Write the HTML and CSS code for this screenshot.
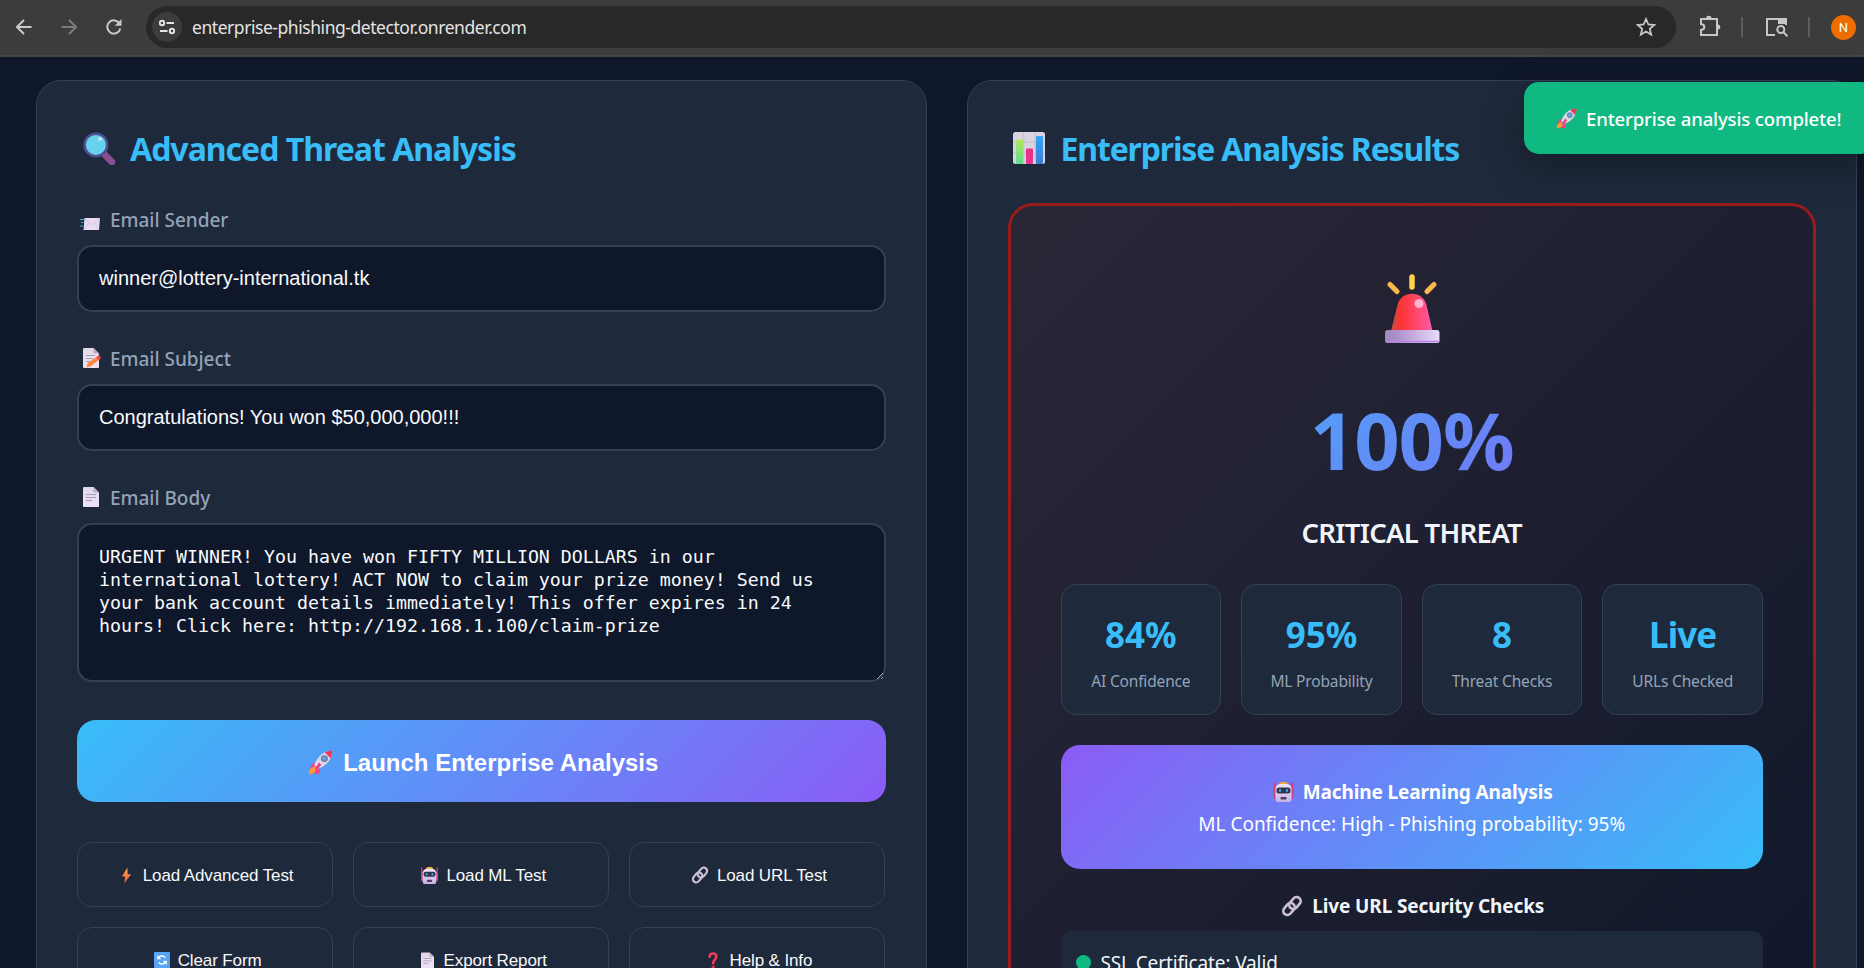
FILE: index.html
```html
<!DOCTYPE html>
<html lang="en">
<head>
<meta charset="utf-8">
<title>Enterprise Phishing Detector</title>
<link rel="stylesheet" href="styles.css">
</head>
<body>
<svg class="defs" width="0" height="0" aria-hidden="true">
  <defs>
    <linearGradient id="g-bolt" x1="0" y1="0" x2="0" y2="1"><stop offset="0" stop-color="#ffb04a"/><stop offset="1" stop-color="#f0503c"/></linearGradient>
    <linearGradient id="g-dome" x1="0" y1="0" x2="1" y2="0"><stop offset="0" stop-color="#c0504a"/><stop offset=".25" stop-color="#ff3434"/><stop offset="1" stop-color="#ff5aa8"/></linearGradient>
    <linearGradient id="g-base" x1="0" y1="0" x2="1" y2="0"><stop offset="0" stop-color="#a08cb4"/><stop offset=".2" stop-color="#ac8ecb"/><stop offset="1" stop-color="#e8dbfa"/></linearGradient>
    <linearGradient id="g-green" x1="0" y1="0" x2="0" y2="1"><stop offset="0" stop-color="#b0e65a"/><stop offset="1" stop-color="#5fdc8c"/></linearGradient>
    <linearGradient id="g-blue" x1="0" y1="0" x2="0" y2="1"><stop offset="0" stop-color="#35a5f5"/><stop offset="1" stop-color="#3b7fd6"/></linearGradient>
    <linearGradient id="g-page" x1="0" y1="0" x2="0" y2="1"><stop offset="0" stop-color="#e0d8e6"/><stop offset="1" stop-color="#eee2f8"/></linearGradient>
    <linearGradient id="g-face" x1="0" y1="0" x2="0" y2="1"><stop offset="0" stop-color="#efe8f6"/><stop offset="1" stop-color="#c9b0e4"/></linearGradient>
    <symbol id="i-rocket" viewBox="0 0 32 32">
      <path d="M9 16 4.500 18.500 2.500 24l6-1.500zM16 23l-2 7.500-5.500.5 1.500-6z" fill="#f8408c"/>
      <path d="M8.500 21.500C3 22.500 1 26 1 31c5 0 8.500-2 9.500-7z" fill="#ff9a2e"/>
      <path d="M31 1C20 1 12 8 8 19.500l4.500 4.500C24 20 31 12 31 1z" fill="#dcd6e6"/>
      <path d="M31 1c-3.500 0-6.500.7-9.500 2l7.500 7.500C30.300 7.500 31 4.500 31 1z" fill="#f5325a"/>
      <path d="M14 16l-5 8 2.500 1.500 5.500-6.500z" fill="#ee3c80"/>
      <circle cx="21" cy="11" r="3.600" fill="#5aa5ee" stroke="#64748f" stroke-width="1.500"/>
    </symbol>
    <symbol id="i-glass" viewBox="0 0 32 32">
      <path d="M21 22l7 7" stroke="#8a4f91" stroke-width="6.500" stroke-linecap="round"/>
      <circle cx="12.500" cy="12.500" r="10.900" fill="#66d2ee" stroke="#4d5093" stroke-width="2.400"/>
      <circle cx="16.500" cy="6.800" r="2" fill="#c3e6fb"/>
    </symbol>
    <symbol id="i-chart" viewBox="0 0 32 32">
      <rect width="32" height="32" rx="2.500" fill="#dad3e0"/>
      <path d="M10.800 0v32M22.300 0v32M0 10h32M0 21h32" stroke="#c3bccb"/>
      <rect x="3" y="7.500" width="7" height="24.500" rx="1" fill="url(#g-green)"/>
      <rect x="13" y="16.500" width="7" height="15.500" rx="1" fill="#e9338a"/>
      <rect x="23" y="4" width="7" height="28" rx="1" fill="url(#g-blue)"/>
    </symbol>
    <symbol id="i-mail" viewBox="0 0 20 12">
      <path d="M4.500 0H20l-1 12H3.500z" fill="#eadcf3"/>
      <path d="M4.500.3l7 6.500L19.800.3M3.700 11.700l5-6.500M18.800 11.700l-4.300-6.500" fill="none" stroke="#c9b2dc" stroke-width=".6"/>
      <path d="M0 1.500h4M1 4.500h2.500M0 8h3" stroke="#35b8d8" stroke-width="1.200"/>
    </symbol>
    <symbol id="i-page" viewBox="0 0 16 20">
      <path d="M1 0h9.500L16 5.500V19a1 1 0 0 1-1 1H1a1 1 0 0 1-1-1V1a1 1 0 0 1 1-1z" fill="url(#g-page)"/>
      <path d="M10.500 0L16 5.500h-4.500a1 1 0 0 1-1-1z" fill="#bcaecb"/>
      <path d="M3 7.500h10M3 10.500h10M3 13.500h6" stroke="#a79db5" stroke-width="1"/>
    </symbol>
    <symbol id="i-memo" viewBox="0 0 18 20">
      <path d="M1 0h9.500L16 5.500V19a1 1 0 0 1-1 1H1a1 1 0 0 1-1-1V1a1 1 0 0 1 1-1z" fill="url(#g-page)"/>
      <path d="M10.500 0L16 5.500h-4.500a1 1 0 0 1-1-1z" fill="#bcaecb"/>
      <path d="M3 7.500h9M3 10.500h7M3 13.500h4" stroke="#a79db5" stroke-width="1"/>
      <path d="M3.500 19.500l1.200-4.500 9.300-6.500 2.500 3-9 7z" fill="#ff8a3c"/>
      <path d="M13.300 9.200l1.700-1.500c1.500-.5 3.300 1.300 2.600 2.800l-1.800 1.500z" fill="#f0445c"/>
    </symbol>
    <symbol id="i-bolt" viewBox="0 0 10 18">
      <path d="M6 0L0 10h3.500L2.500 18 10 7.500H6.200z" fill="url(#g-bolt)"/>
    </symbol>
    <symbol id="i-bot" viewBox="0 0 20 20">
      <path d="M1 1v15M19 1v15" stroke="#d93a72" stroke-width="1.600" stroke-linecap="round"/>
      <rect y="6" width="3" height="10" rx="1.500" fill="#c9487f"/>
      <rect x="17" y="6" width="3" height="10" rx="1.500" fill="#c9487f"/>
      <rect x="6" y="0" width="8" height="4" rx="2" fill="#f2ab34"/>
      <path d="M6 2h8q4 1 4 6v9q0 3-3 3H5q-3 0-3-3V8q0-5 4-6z" fill="url(#g-face)"/>
      <rect x="3" y="5.500" width="14" height="6" rx="2.500" fill="#323450"/>
      <rect x="5.500" y="7" width="2" height="3" rx="1" fill="#3fb0f5"/>
      <rect x="12.500" y="7" width="2" height="3" rx="1" fill="#3fb0f5"/>
      <rect x="7" y="15" width="6" height="2.500" rx=".8" fill="#49405f"/>
    </symbol>
    <symbol id="i-link" viewBox="0 0 20 20">
      <g fill="none" stroke="#cdbfd8" stroke-width="2.400">
        <rect x="1.300" y="9" width="12" height="7.400" rx="3.700" transform="rotate(-50 7.300 12.700)"/>
        <rect x="6.700" y="3.600" width="12" height="7.400" rx="3.700" transform="rotate(-50 12.700 7.300)"/>
      </g>
    </symbol>
    <symbol id="i-sync" viewBox="0 0 16 16">
      <rect width="16" height="16" rx="1" fill="#58a4f7"/>
      <path d="M4.500 6.200c1-2.600 5-3.100 6.800-.6M11.500 9.800c-1 2.600-5 3.100-6.800.6" fill="none" stroke="#fff" stroke-width="1.600"/>
      <path d="M3.200 3v4.200h4zM12.800 13V8.800h-4z" fill="#fff"/>
    </symbol>
    <symbol id="i-question" viewBox="0 0 10 18">
      <path d="M1.500 5C1.500 .5 8.500 .5 8.500 5c0 3-3.300 3.200-3.300 7" fill="none" stroke="#f03a5c" stroke-width="2.800" stroke-linecap="round"/>
      <circle cx="5.200" cy="16" r="1.800" fill="#e0304f"/>
    </symbol>
    <symbol id="i-siren" viewBox="0 0 55 69">
      <path d="M27 3v10" stroke="#ffd24a" stroke-width="5.500" stroke-linecap="round"/>
      <path d="M5 10.500l7 7M49 10.500l-7 7" stroke="#f9b94a" stroke-width="5.200" stroke-linecap="round"/>
      <path d="M6 57L12.500 31C16 16 38 16 41.500 31l6 26z" fill="url(#g-dome)"/>
      <ellipse cx="34" cy="29.500" rx="4.500" ry="4.500" fill="#ffb3d0"/>
      <rect x="0" y="56" width="54.500" height="13" rx="2.500" fill="url(#g-base)"/>
      <path d="M1 67.500h52.500" stroke="#b583ea" stroke-width="1.500"/>
    </symbol>
  </defs>
</svg>

<header class="toolbar">
  <nav class="nav">
    <svg class="nav-icon" viewBox="0 0 16 16"><path d="M15.500 8H1.500M8 1L1 8l7 7"/></svg>
    <svg class="nav-icon nav-off" viewBox="0 0 16 16"><path d="M.5 8h14M8 1l7 7-7 7"/></svg>
    <svg class="nav-icon" viewBox="0 0 16 16"><path d="M13.500 4.500A6.600 6.600 0 1 0 14.300 9.500"/><path class="solid" d="M15.500 0v6.800H8.700l2.500-2.500L13.500 2z"/></svg>
  </nav>
  <div class="address">
    <span class="site"><svg viewBox="0 0 16 16" width="16" height="16"><circle cx="3" cy="4" r="2.200"/><path d="M7.500 4H15M1 12h7.500"/><circle cx="13" cy="12" r="2.200"/></svg></span>
    <span class="url">enterprise-phishing-detector.onrender.com</span>
    <svg class="star" viewBox="0 0 20 20"><path d="M10 2l2.400 5.500 5.900.5-4.500 3.900 1.400 5.800L10 14.600l-5.200 3.100 1.400-5.800L1.700 8l5.900-.5z"/></svg>
  </div>
  <div class="tools">
    <svg class="puzzle" viewBox="0 0 22 22"><path d="M2 4h16v16H2v-5c4.500-.5 4.500-5.500 0-6z"/><path class="solid" d="M7 4a2.800 3.300 0 0 1 5.600 0zM18 9.200a3.300 2.800 0 0 1 0 5.600z"/></svg>
    <span class="sep"></span>
    <svg class="lens" viewBox="0 0 22 20"><path d="M9 18H1V2h19v6"/><path class="solid" d="M12 1h9v6h-9z"/><circle cx="14.800" cy="12.500" r="3.500"/><path d="M17.500 15.300l4 4"/></svg>
    <span class="sep sep-2"></span>
    <span class="avatar">N</span>
  </div>
</header>

<main class="page">
  <section class="card">
    <h2 class="title"><span class="slot"><svg class="ic-33"><use href="#i-glass"/></svg></span><span class="t-left">Advanced Threat Analysis</span></h2>
    <div class="field">
      <label class="label"><span class="lslot"><svg class="ic-mail"><use href="#i-mail"/></svg></span><span>Email Sender</span></label>
      <input class="input" type="text" value="winner@lottery-international.tk">
    </div>
    <div class="field">
      <label class="label"><span class="lslot doc"><svg class="ic-memo"><use href="#i-memo"/></svg></span><span>Email Subject</span></label>
      <input class="input" type="text" value="Congratulations! You won $50,000,000!!!">
    </div>
    <div class="field">
      <label class="label"><span class="lslot doc"><svg class="ic-page"><use href="#i-page"/></svg></span><span>Email Body</span></label>
      <textarea class="input area" spellcheck="false">URGENT WINNER! You have won FIFTY MILLION DOLLARS in our international lottery! ACT NOW to claim your prize money! Send us your bank account details immediately! This offer expires in 24 hours! Click here: http://192.168.1.100/claim-prize</textarea>
    </div>
    <button class="launch"><svg class="ic-rocket"><use href="#i-rocket"/></svg><span>Launch Enterprise Analysis</span></button>
    <div class="actions">
      <button class="action"><svg class="a-bolt"><use href="#i-bolt"/></svg><span class="tight">Load Advanced Test</span></button>
      <button class="action"><svg class="a-bot"><use href="#i-bot"/></svg><span class="tight">Load ML Test</span></button>
      <button class="action url-test"><svg class="a-link"><use href="#i-link"/></svg><span class="tight">Load URL Test</span></button>
      <button class="action"><svg class="a-sync"><use href="#i-sync"/></svg><span class="tight">Clear Form</span></button>
      <button class="action"><svg class="a-page"><use href="#i-page"/></svg><span class="tight">Export Report</span></button>
      <button class="action"><svg class="a-q"><use href="#i-question"/></svg><span class="tight">Help &amp; Info</span></button>
    </div>
  </section>

  <section class="card">
    <h2 class="title"><span class="slot"><svg class="ic-32"><use href="#i-chart"/></svg></span><span class="t-right">Enterprise Analysis Results</span></h2>
    <div class="result">
      <svg class="siren"><use href="#i-siren"/></svg>
      <div class="score">100%</div>
      <div class="level">CRITICAL THREAT</div>
      <div class="stats">
        <div class="stat"><b>84%</b><span>AI Confidence</span></div>
        <div class="stat"><b>95%</b><span>ML Probability</span></div>
        <div class="stat"><b>8</b><span>Threat Checks</span></div>
        <div class="stat"><b class="word">Live</b><span>URLs Checked</span></div>
      </div>
      <div class="ml">
        <div class="ml-title"><svg class="ic-22"><use href="#i-bot"/></svg><span>Machine Learning Analysis</span></div>
        <div class="ml-text">ML Confidence: High - Phishing probability: 95%</div>
      </div>
      <div class="live"><svg class="ic-21"><use href="#i-link"/></svg><span>Live URL Security Checks</span></div>
      <div class="checks"><div class="check"><span class="dot"></span><span>SSL Certificate: Valid</span></div></div>
    </div>
  </section>
</main>

<div class="toast"><svg class="ic-toast"><use href="#i-rocket"/></svg><span>Enterprise analysis complete!</span></div>
</body>
</html>
```
FILE: styles.css
```css
* { box-sizing: border-box; }
html, body { height: 968px; overflow: hidden; }
body {
  margin: 0;
  background: #0f172a;
  color: #f1f5f9;
  font-family: "Noto Sans", "Open Sans", sans-serif;
}
svg { display: block; flex: none; }
.defs { position: absolute; }

/* Browser toolbar */
.toolbar {
  display: flex;
  align-items: flex-start;
  height: 57px;
  padding-top: 6px;
  background: #3c3c3c;
  border-bottom: 2px solid #474742;
}
.nav { display: flex; gap: 29px; padding: 13px 0 0 16px; width: 146px; }
.nav-icon { width: 16px; height: 16px; fill: none; stroke: #c9c9c9; stroke-width: 2; }
.nav-icon .solid { fill: #c9c9c9; stroke: none; }
.nav-off { stroke: #7d7d7d; }
.address {
  display: flex;
  align-items: center;
  width: 1530px;
  height: 42px;
  padding: 0 20px 0 6px;
  border-radius: 21px;
  background: #282828;
}
.site {
  display: flex;
  align-items: center;
  justify-content: center;
  width: 30px;
  height: 30px;
  border-radius: 50%;
  background: #3c3c3c;
}
.site svg { fill: none; stroke: #e3e3e3; stroke-width: 2; }
.url { flex: 1; padding: 0 0 0 10px; font-size: 17.500px; letter-spacing: -0.450px; color: #e3e3e3; }
.star { width: 20px; height: 20px; fill: none; stroke: #c7c7c7; stroke-width: 1.800; }
.tools { display: flex; align-items: center; height: 42px; padding-left: 22px; }
.tools svg { fill: none; stroke: #c7c7c7; stroke-width: 2; }
.tools .solid { fill: #c7c7c7; stroke: none; }
.puzzle { width: 22px; height: 22px; margin: -2px -1px 0 1px; }
.lens { width: 22px; height: 20px; margin-left: 23px; }
.sep { width: 2px; height: 20px; margin-left: 21px; background: #5e5e5e; }
.sep-2 { margin-left: 20px; }
.avatar {
  width: 25px;
  height: 25px;
  margin-left: 21px;
  border-radius: 50%;
  background: #ef6c00;
  color: #fff;
  font: 13px/25px Roboto, sans-serif;
  text-align: center;
}

/* Page */
.page {
  display: grid;
  grid-template-columns: 1fr 1fr;
  gap: 40px;
  height: 911px;
  padding: 23px 7px 0 36px;
  overflow: hidden;
}
.card {
  height: 1060px;
  padding: 40px;
  border: 1px solid #334155;
  border-radius: 25px;
  background: #1e293b;
}
.title {
  display: flex;
  align-items: center;
  height: 53px;
  margin: 0 0 29px;
  color: #38bdf8;
  font-size: 32px;
  font-weight: 700;
  line-height: 53px;
  white-space: nowrap;
}
.slot { width: 53px; padding-left: 6px; }
.t-left, .t-right { padding-top: 1px; letter-spacing: -1.000px; }
.t-right { letter-spacing: -1.160px; }
.ic-33 { width: 33px; height: 33px; margin-top: 2px; }
.ic-32 { width: 32px; height: 32px; margin-left: -1px; }

.field { margin-bottom: 30px; }
.label {
  display: flex;
  align-items: center;
  height: 34px;
  margin-bottom: 8px;
  color: #94a3b8;
  font-size: 19px;
  font-weight: 500;
  letter-spacing: -0.030px;
}
.lslot { width: 33px; padding-left: 3px; }
.lslot.doc { padding-left: 6px; }
.ic-mail { width: 20px; height: 12px; margin-top: 8px; }
.ic-memo { width: 18px; height: 20px; margin-top: -2px; }
.ic-page { width: 16px; height: 20px; margin-top: -2px; }
.input {
  display: block;
  width: 100%;
  height: 67px;
  padding: 20px;
  border: 2px solid #334155;
  border-radius: 15px;
  outline: none;
  background: #0f172a;
  color: #f8fafc;
  font: 20px "Liberation Sans", Arial, sans-serif;
}
.area {
  height: 159px;
  resize: vertical;
  font: 18.270px/23px "DejaVu Sans Mono", monospace;
}

.launch {
  display: flex;
  align-items: center;
  justify-content: center;
  gap: 10px;
  width: 100%;
  height: 82px;
  margin: 38px 0 40px;
  padding: 2px 0 0 4px;
  border: 0;
  border-radius: 19px;
  background: linear-gradient(135deg, #38bdf8, #8b5cf6);
  color: #fff;
  font: bold 24px "Liberation Sans", Arial, sans-serif;
}
.ic-rocket { width: 25px; height: 25px; }
.launch span { padding-top: 1px; }
.actions { display: grid; grid-template-columns: repeat(3, 1fr); gap: 20px; }
.action {
  display: flex;
  align-items: center;
  justify-content: center;
  gap: 8px;
  height: 65px;
  padding: 1px 0 0 5px;
  border: 1px solid #334155;
  border-radius: 15px;
  background: #1e293b;
  color: #f8fafc;
  font: 17px "Liberation Sans", Arial, sans-serif;
}
.action .tight { padding-top: 1px; letter-spacing: -0.120px; }
.action.url-test { padding-left: 3px; }
.a-bolt { width: 9px; height: 17px; margin-right: 4px; }
.a-bot { width: 17px; height: 17px; }
.a-link { width: 18px; height: 18px; }
.a-sync { width: 16px; height: 16px; }
.a-page { width: 13px; height: 17px; margin-right: 2px; }
.a-q { width: 10px; height: 17px; margin-right: 4px; }

/* Results */
.result {
  display: flex;
  flex-direction: column;
  height: 900px;
  padding: 50px;
  border: 3px solid #991b1b;
  border-radius: 25px;
  background: linear-gradient(135deg, #2a2737, #0f172a);
}
.siren { width: 55px; height: 69px; margin: 18px 323px 45px 324px; }
.score {
  height: 100px;
  padding-top: 1px;
  background: linear-gradient(135deg, #38bdf8, #8b5cf6);
  background-clip: text;
  -webkit-background-clip: text;
  color: transparent;
  font-size: 79.500px;
  font-weight: 700;
  letter-spacing: -1px;
  line-height: 100px;
  text-align: center;
}
.level { margin: 24px 0 32px; font-size: 27.500px; font-weight: 600; letter-spacing: -0.700px; line-height: 41px; height: 40px; text-align: center; }
.stats { display: grid; grid-template-columns: repeat(4, 1fr); gap: 20px; margin-bottom: 30px; }
.stat {
  display: flex;
  flex-direction: column;
  align-items: center;
  height: 131px;
  padding-top: 25px;
  border: 1px solid #334155;
  border-radius: 15px;
  background: #1e293b;
}
.stat b { color: #38bdf8; font-size: 35px; line-height: 50px; }
.stat .word { letter-spacing: -0.900px; }
.stat span { margin-top: 5px; color: #94a3b8; font-size: 15.500px; letter-spacing: -0.160px; line-height: 32px; }
.ml {
  height: 124px;
  padding: 31px 0;
  border-radius: 19px;
  background: linear-gradient(135deg, #8b5cf6, #38bdf8);
  color: #fff;
  text-align: center;
}
.ml-title, .live { display: flex; align-items: center; justify-content: center; gap: 9px; font-size: 19px; font-weight: 700; letter-spacing: -0.130px; line-height: 32px; }
.ml-title { padding-left: 2px; }
.ml-text { font-size: 19px; line-height: 32px; }
.ic-22 { width: 21px; height: 20px; }
.ic-21 { width: 22px; height: 22px; }
.live { margin: 21px 0 9px; padding-left: 2px; }
.checks { height: 160px; padding: 15px; border-radius: 10px; background: #1e293b; }
.check { display: flex; align-items: center; gap: 10px; font-size: 19px; letter-spacing: -0.130px; line-height: 34px; }
.dot { width: 15px; height: 15px; margin-top: -2px; border-radius: 50%; background: #10b981; }

/* Toast hangs over the page and runs past the right edge */
.toast {
  position: absolute;
  top: 82px;
  left: 1524px;
  display: flex;
  align-items: center;
  gap: 9px;
  width: 352px;
  height: 72px;
  padding-left: 32px;
  border-radius: 15px;
  background: #10b981;
  box-shadow: 0 12px 38px rgba(0, 0, 0, 0.300);
  color: #fff;
  font-size: 18.500px;
  font-weight: 500;
  letter-spacing: -0.130px;
  white-space: nowrap;
}
.ic-toast { width: 21px; height: 21px; }
```
